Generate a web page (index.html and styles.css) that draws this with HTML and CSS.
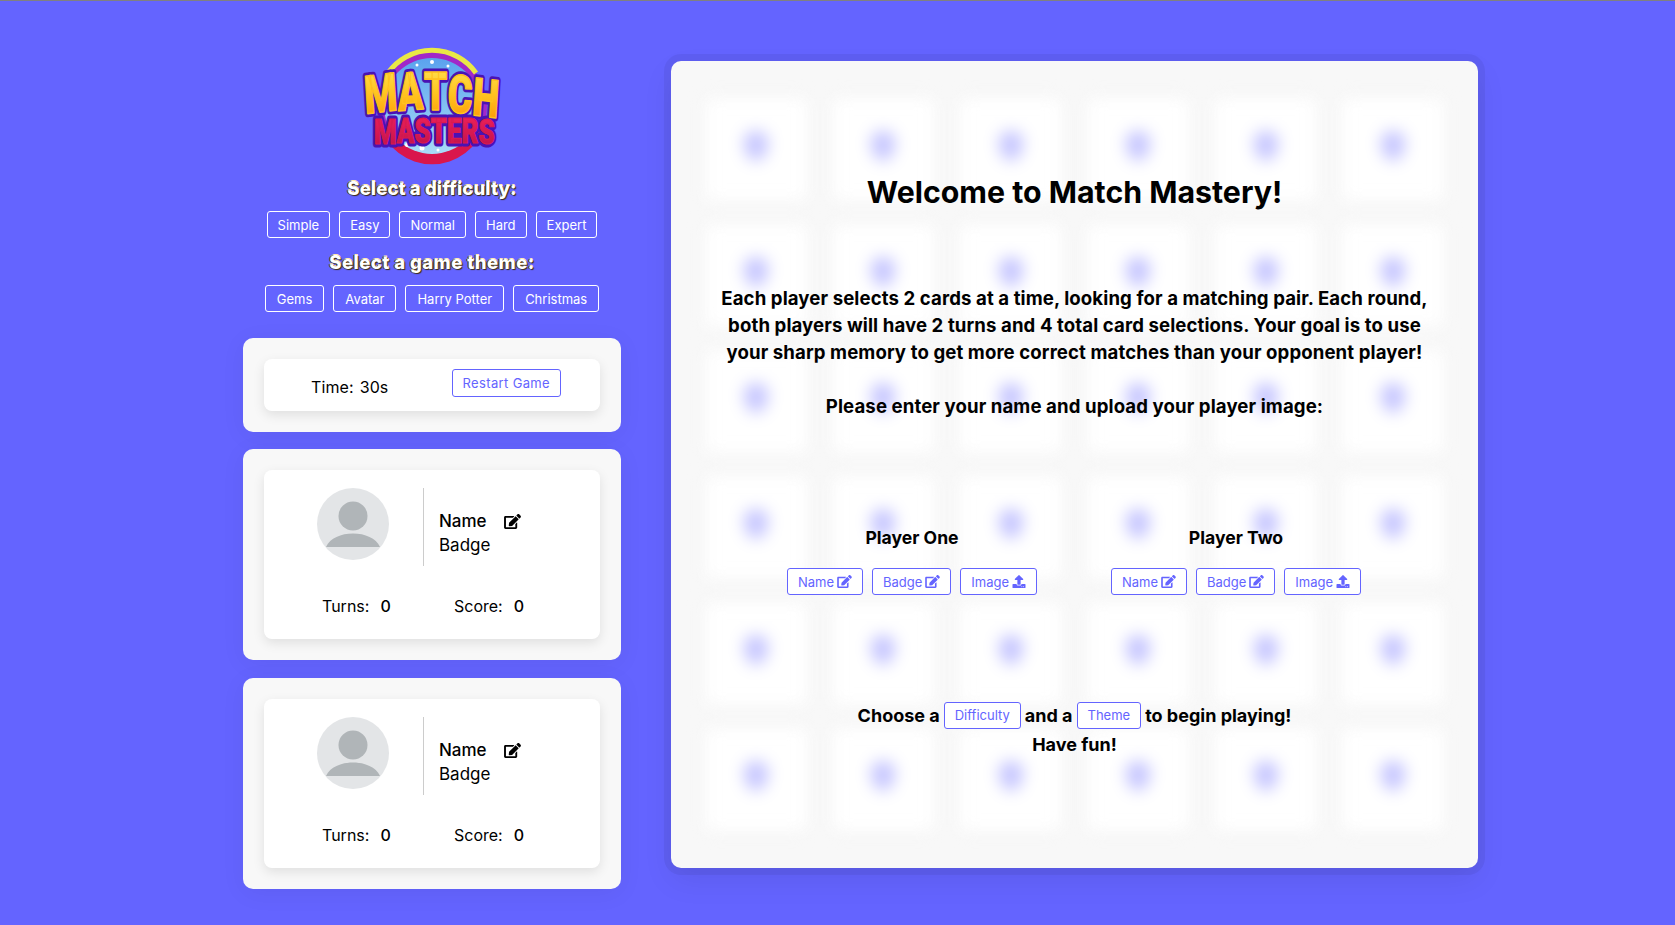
FILE: index.html
```html
<!DOCTYPE html>
<html lang="en">
<head>
<meta charset="utf-8">
<title>Match Mastery</title>
<link rel="stylesheet" href="styles.css">
</head>
<body>
<svg class="defs" width="0" height="0" aria-hidden="true">
  <symbol id="i-edit" viewBox="0 0 576 512"><path fill="currentColor" d="M402.6 83.2l90.2 90.2c3.8 3.8 3.8 10 0 13.8L274.4 405.6l-92.8 10.3c-12.4 1.4-22.9-9.1-21.5-21.5l10.3-92.8L388.8 83.2c3.8-3.8 10-3.8 13.8 0zm162-22.9l-48.8-48.8c-15.2-15.2-39.9-15.2-55.2 0l-35.4 35.4c-3.8 3.8-3.8 10 0 13.8l90.2 90.2c3.8 3.8 10 3.8 13.8 0l35.4-35.4c15.2-15.3 15.2-40 0-55.2zM384 346.2V448H64V128h229.8c3.2 0 6.2-1.3 8.5-3.5l40-40c7.6-7.6 2.2-20.5-8.5-20.5H48C21.5 64 0 85.5 0 112v352c0 26.5 21.5 48 48 48h352c26.5 0 48-21.5 48-48V306.2c0-10.7-12.9-16-20.5-8.5l-40 40c-2.2 2.3-3.5 5.3-3.5 8.5z"/></symbol>
  <symbol id="i-upload" viewBox="0 0 512 512"><path fill="currentColor" d="M296 384h-80c-13.3 0-24-10.7-24-24V192h-87.7c-17.8 0-26.7-21.5-14.1-34.1L242.3 5.7c7.5-7.5 19.8-7.5 27.3 0l152.2 152.2c12.6 12.6 3.7 34.1-14.1 34.1H320v168c0 13.3-10.7 24-24 24zm216-8v112c0 13.3-10.7 24-24 24H24c-13.3 0-24-10.7-24-24V376c0-13.3 10.7-24 24-24h136v8c0 30.9 25.1 56 56 56h80c30.9 0 56-25.1 56-56v-8h136c13.3 0 24 10.7 24 24zm-124 88c0-11-9-20-20-20s-20 9-20 20 9 20 20 20 20-9 20-20zm64 0c0-11-9-20-20-20s-20 9-20 20 9 20 20 20 20-9 20-20z"/></symbol>
  <symbol id="i-avatar" viewBox="0 0 72 72"><circle cx="36" cy="36" r="36" fill="#e3e5e7"/><circle cx="36" cy="28" r="14.5" fill="#b0b5b8"/><path d="M9 59c4-9 15-13.500 27-13.500S59 50 63 59z" fill="#b0b5b8"/></symbol>
</svg>
<div class="page">
  <aside class="sidebar">
    <svg class="logo" viewBox="0 0 140 120" role="img" aria-label="Match Masters">
      <defs>
        <linearGradient id="g-sky" x1="0" y1="0" x2="0" y2="1"><stop offset="0" stop-color="#5aa2ee"/><stop offset="1" stop-color="#a9dcf8"/></linearGradient>
        <linearGradient id="g-gold" x1="0" y1="0" x2="0" y2="1"><stop offset="0" stop-color="#ffe95a"/><stop offset=".5" stop-color="#ffc21e"/><stop offset="1" stop-color="#ff8a00"/></linearGradient>
        <linearGradient id="g-red" x1="0" y1="0" x2="0" y2="1"><stop offset="0" stop-color="#f5245c"/><stop offset="1" stop-color="#b80f48"/></linearGradient>
      </defs>
      <circle cx="70" cy="59" r="55" fill="#a128c8"/>
      <path d="M17 77a55 55 0 0 0 106 0z" fill="#d9164c"/>
      <circle cx="70" cy="59" r="48" fill="url(#g-sky)"/>
      <path d="M26 26A54 54 0 0 1 114 26" fill="none" stroke="#e9e846" stroke-width="5"/>
      <g fill="#fff"><circle cx="55" cy="18" r="1.500"/><circle cx="70" cy="15" r="2"/><circle cx="86" cy="19" r="1.500"/><circle cx="60" cy="101" r="2.500"/><circle cx="76" cy="103" r="1.500"/><circle cx="45" cy="98" r="2"/></g>
      <g class="logo-outline"><use href="#logo-w1"/><use href="#logo-w2"/></g>
      <text id="logo-w1" class="logo-match" transform="translate(3.500 0) scale(.705 1)" y="67 64 63 65 68" rotate="-5 -3 0 3 5">MATCH</text>
      <text id="logo-w2" class="logo-masters" transform="translate(12 0) scale(.72 1)" y="97 96 96 96 96 96 97">MASTERS</text>
    </svg>
    <h2 class="pick-title">Select a difficulty:</h2>
    <div class="pick-row">
      <button class="btn btn-light">Simple</button>
      <button class="btn btn-light">Easy</button>
      <button class="btn btn-light">Normal</button>
      <button class="btn btn-light">Hard</button>
      <button class="btn btn-light">Expert</button>
    </div>
    <h2 class="pick-title pick-title-second">Select a game theme:</h2>
    <div class="pick-row pick-row-wide">
      <button class="btn btn-light">Gems</button>
      <button class="btn btn-light">Avatar</button>
      <button class="btn btn-light">Harry Potter</button>
      <button class="btn btn-light">Christmas</button>
    </div>

    <section class="panel panel-first">
      <div class="card timer">
        <span class="time"><span>Time:</span><span>30s</span></span>
        <button class="btn btn-purple restart">Restart Game</button>
      </div>
    </section>

    <section class="panel">
      <div class="card player">
        <div class="player-top">
          <div class="avatar-cell"><svg class="avatar"><use href="#i-avatar"/></svg></div>
          <div class="player-info">
            <div class="player-name"><span>Name</span><svg class="icon-edit"><use href="#i-edit"/></svg></div>
            <div class="player-badge">Badge</div>
          </div>
        </div>
        <div class="player-stats">
          <span class="stat stat-turns"><span>Turns:</span><span>0</span></span>
          <span class="stat"><span>Score:</span><span>0</span></span>
        </div>
      </div>
    </section>

    <section class="panel panel-last">
      <div class="card player">
        <div class="player-top">
          <div class="avatar-cell"><svg class="avatar"><use href="#i-avatar"/></svg></div>
          <div class="player-info">
            <div class="player-name"><span>Name</span><svg class="icon-edit"><use href="#i-edit"/></svg></div>
            <div class="player-badge">Badge</div>
          </div>
        </div>
        <div class="player-stats">
          <span class="stat stat-turns"><span>Turns:</span><span>0</span></span>
          <span class="stat"><span>Score:</span><span>0</span></span>
        </div>
      </div>
    </section>
  </aside>

  <main class="board">
    <div class="board-blur" aria-hidden="true">
      <div class="tile"><i></i></div><div class="tile"><i></i></div><div class="tile"><i></i></div><div class="tile"><i></i></div><div class="tile"><i></i></div><div class="tile"><i></i></div>
      <div class="tile"><i></i></div><div class="tile"><i></i></div><div class="tile"><i></i></div><div class="tile"><i></i></div><div class="tile"><i></i></div><div class="tile"><i></i></div>
      <div class="tile"><i></i></div><div class="tile"><i></i></div><div class="tile"><i></i></div><div class="tile"><i></i></div><div class="tile"><i></i></div><div class="tile"><i></i></div>
      <div class="tile"><i></i></div><div class="tile"><i></i></div><div class="tile"><i></i></div><div class="tile"><i></i></div><div class="tile"><i></i></div><div class="tile"><i></i></div>
      <div class="tile"><i></i></div><div class="tile"><i></i></div><div class="tile"><i></i></div><div class="tile"><i></i></div><div class="tile"><i></i></div><div class="tile"><i></i></div>
      <div class="tile"><i></i></div><div class="tile"><i></i></div><div class="tile"><i></i></div><div class="tile"><i></i></div><div class="tile"><i></i></div><div class="tile"><i></i></div>
    </div>
    <div class="welcome">
      <h1 class="welcome-title">Welcome to Match Mastery!</h1>
      <p class="welcome-text">Each player selects 2 cards at a time, looking for a matching pair. Each round,<br>both players will have 2 turns and 4 total card selections. Your goal is to use<br>your sharp memory to get more correct matches than your opponent player!</p>
      <p class="welcome-text welcome-ask">Please enter your name and upload your player image:</p>
      <div class="setup">
        <div class="setup-col">
          <h3 class="setup-title">Player One</h3>
          <div class="setup-row">
            <button class="btn btn-purple">Name<svg class="icon-sm"><use href="#i-edit"/></svg></button>
            <button class="btn btn-purple">Badge<svg class="icon-sm"><use href="#i-edit"/></svg></button>
            <button class="btn btn-purple">Image<svg class="icon-sm icon-up"><use href="#i-upload"/></svg></button>
          </div>
        </div>
        <div class="setup-col">
          <h3 class="setup-title">Player Two</h3>
          <div class="setup-row">
            <button class="btn btn-purple">Name<svg class="icon-sm"><use href="#i-edit"/></svg></button>
            <button class="btn btn-purple">Badge<svg class="icon-sm"><use href="#i-edit"/></svg></button>
            <button class="btn btn-purple">Image<svg class="icon-sm icon-up"><use href="#i-upload"/></svg></button>
          </div>
        </div>
      </div>
      <div class="choose">
        <div class="choose-line"><span>Choose a</span><button class="btn btn-purple">Difficulty</button><span>and a</span><button class="btn btn-purple">Theme</button><span>to begin playing!</span></div>
        <div class="fun">Have fun!</div>
      </div>
    </div>
  </main>
</div>
</body>
</html>
```
FILE: styles.css
```css
* { box-sizing: border-box; }
html, body { height: 100%; }
body {
  margin: 0;
  background: #6464ff;
  border-top: 1px solid #808080;
  overflow: hidden;
  font-family: Inter, "Noto Sans", sans-serif;
  color: #000;
}
.defs { position: absolute; }
.page {
  display: flex;
  align-items: flex-start;
  gap: 50px;
  padding-left: 243px;
}
.sidebar {
  width: 378px;
  display: flex;
  flex-direction: column;
  align-items: stretch;
  padding-top: 46px;
}
.logo { display: block; width: 140px; height: 120px; margin: 0 0 -2px 119px; overflow: visible; }
.logo-outline { --s: #4a12b4; --w: 7px; }
.logo-match {
  font: 900 53px Roboto, sans-serif;
  fill: url(#g-gold);
  stroke: var(--s, #ffc21e);
  stroke-width: var(--w, 1.500px);
  stroke-linejoin: round;
}
.logo-masters {
  font: 900 36px Roboto, sans-serif;
  fill: url(#g-red);
  stroke: var(--s, #d81a50);
  stroke-width: var(--w, 1.200px);
  stroke-linejoin: round;
}
.pick-title {
  margin: 10px 0 9px;
  font-size: 18.5px;
  font-weight: 800;
  line-height: 27px;
  letter-spacing: .1px;
  text-align: center;
  color: #fff;
  text-shadow: 1px 1px 1px #3a2a10, -1px 0 0 #4a3a20, 0 -1px 0 #ffe9b0;
}
.pick-title-second { margin-top: 11px; letter-spacing: .45px; }
.pick-row {
  display: flex;
  justify-content: center;
  gap: 9px;
}
.btn {
  height: 27px;
  padding: 0 10px;
  border-radius: 3px;
  font-family: inherit;
  font-size: 13px;
  font-weight: 400;
  background: transparent;
  display: inline-flex;
  align-items: center;
  justify-content: center;
  white-space: nowrap;
}
.btn-light { border: 1px solid #fff; color: #fff; }
.btn-purple { border: 1px solid #6464ff; color: #6464ff; background: #fff; }
.pick-row-wide .btn { padding: 0 11px; }

.panel {
  margin-top: 17px;
  padding: 21px;
  background: #f8f8f8;
  border-radius: 10px;
  box-shadow: 0 4px 24px rgba(0, 0, 0, .06);
}
.panel-first { margin-top: 26px; }
.panel-last { margin-top: 18px; }
.card {
  background: #fff;
  border-radius: 8px;
  box-shadow: 0 4px 12px rgba(0, 0, 0, .1);
}
.timer {
  height: 52px;
  display: flex;
  align-items: center;
  padding: 0 39px 0 47px;
  justify-content: space-between;
  font-size: 16px;
}
.time { display: flex; gap: 6px; margin-top: 3px; letter-spacing: .1px; }
.restart { height: 28px; margin-top: -5px; padding: 0 10px; letter-spacing: .35px; }

.player { height: 169px; padding-top: 18px; }
.player-top { display: flex; height: 78px; }
.avatar-cell {
  width: 160px;
  border-right: 1px solid #ccc;
  padding-left: 53px;
}
.avatar { display: block; width: 72px; height: 72px; }
.player-info {
  padding: 21px 0 0 15px;
  font-size: 17px;
  line-height: 24px;
}
.player-name { display: flex; align-items: center; gap: 17px; font-weight: 500; }
.icon-edit { width: 17px; height: 15px; }
.player-stats {
  display: flex;
  padding: 28px 0 0 58px;
  font-size: 16px;
  line-height: 24px;
}
.stat { display: flex; gap: 11px; }
.stat span:last-child { font-weight: 500; }
.stat-turns { width: 132px; }

.board {
  position: relative;
  width: 807px;
  height: 807px;
  margin-top: 60px;
  background: #f8f8f8;
  border-radius: 10px;
  box-shadow: 0 0 0 7px rgba(0, 0, 0, .05), 0 12px 30px rgba(0, 0, 0, .08);
}
.board-blur {
  position: absolute;
  inset: 0;
  display: grid;
  grid-template-columns: repeat(6, 103px);
  grid-auto-rows: 103px;
  gap: 23px 24.400px;
  justify-content: center;
  align-content: center;
  filter: blur(8px);
  overflow: hidden;
  clip-path: inset(0 round 10px);
}
.tile {
  background: #fff;
  border-radius: 6px;
  box-shadow: 0 0 8px rgba(0, 0, 0, .04);
  display: flex;
  align-items: center;
  justify-content: center;
}
.tile i {
  display: block;
  width: 24px;
  height: 30px;
  margin-top: -8px;
  background: #c4c4ff;
  border-radius: 50% 50% 50% 50% / 35% 35% 65% 65%;
}
.welcome {
  position: relative;
  padding-top: 109px;
  text-align: center;
}
.welcome-title {
  margin: 0;
  font-size: 30.3px;
  font-weight: 700;
  line-height: 44px;
}
.welcome-text {
  margin: 71px 0 0;
  font-size: 18.6px;
  font-weight: 700;
  line-height: 27px;
  letter-spacing: .1px;
}
.welcome-ask { margin-top: 27px; }
.setup {
  display: flex;
  padding-left: 79px;
  margin-top: 105px;
}
.setup-col { width: 324px; }
.setup-title {
  margin: 0;
  font-size: 17.6px;
  font-weight: 700;
  line-height: 26px;
}
.setup-row {
  display: flex;
  justify-content: center;
  gap: 9px;
  margin-top: 17px;
}
.icon-sm { width: 15px; height: 13px; margin-left: 3px; }
.icon-up { width: 14px; }
.choose { margin-top: 106px; font-size: 18px; font-weight: 700; line-height: 29px; }
.choose-line { display: flex; justify-content: center; align-items: center; gap: 4px; height: 28px; }
.fun { margin-top: 1px; }
```
